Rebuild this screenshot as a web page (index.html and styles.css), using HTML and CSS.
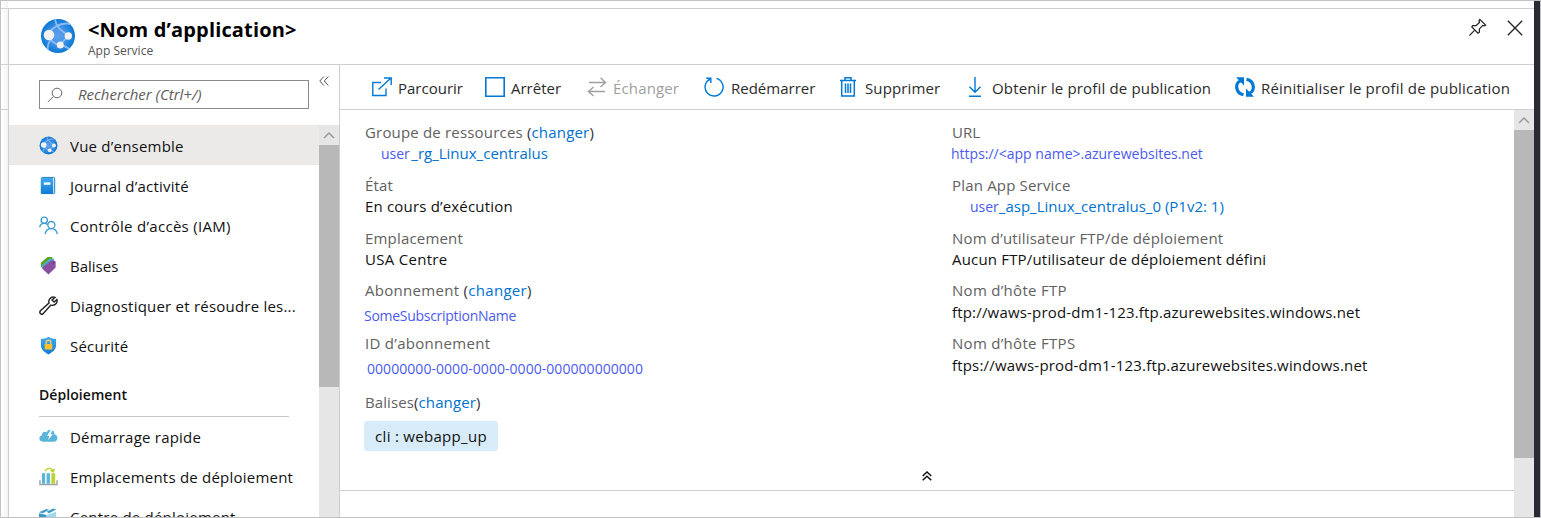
FILE: index.html
```html
<!DOCTYPE html>
<html lang="fr">
<head>
<meta charset="utf-8">
<title>App Service</title>
<link rel="stylesheet" href="styles.css">
</head>
<body>
<svg width="0" height="0" class="defs">
  <defs>
    <radialGradient id="globeFill"><stop offset="0" stop-color="#5ea0ef"/><stop offset=".45" stop-color="#4796e8"/><stop offset="1" stop-color="#0b78d4"/></radialGradient>
    <linearGradient id="blueFill" x1="0" y1="0" x2="0" y2="1"><stop offset="0" stop-color="#3faaf0"/><stop offset="1" stop-color="#0f7bd6"/></linearGradient>
    <clipPath id="globeClip"><circle cx="18" cy="18" r="17"/></clipPath>
    <symbol id="globe" viewBox="0 0 36 36">
      <circle cx="18" cy="18" r="17" fill="url(#globeFill)"/>
      <g clip-path="url(#globeClip)" fill="none" stroke="#8dbcf5" stroke-width="1.8">
        <path d="M8 16C13 9 21 4 31 6M15 0C15 6 20 13 30 18M9 17C10 22 14 26 20 27C25 28 30 31 32 34M20 27L28 18M12 20C8 25 7 29 8 33"/>
      </g>
      <circle cx="9" cy="17" r="5.3" fill="#f2f2f2"/><circle cx="28.3" cy="18" r="3.7" fill="#f2f2f2"/><circle cx="20.3" cy="27" r="3.5" fill="#f2f2f2"/>
    </symbol>
  </defs>
</svg>
<div class="window">
  <div class="behind"><i></i><i></i><i></i></div>
  <div class="blade">
    <header class="head">
      <svg class="head-icon"><use href="#globe"/></svg>
      <div class="titles">
        <h1>&lt;Nom d’application&gt;</h1>
        <p>App Service</p>
      </div>
      <svg class="pin" viewBox="0 0 20 20"><path d="M12.500 1.500L18.500 7.500L17 8.200L15.500 7.800L12 11.500V15L10.500 16L4 9.500L5 8H8.500L12.200 4.500L11.500 3ZM7 12.700L1.500 18.500"/></svg>
      <svg class="close" viewBox="0 0 16 16"><path d="M.8.800L15.200 15.200M15.200.8L.8 15.200"/></svg>
    </header>
    <div class="main">
      <aside class="side">
        <div class="search-row">
          <div class="search">
            <svg viewBox="0 0 16 16"><circle cx="10" cy="6" r="4.800"/><path d="M6.500 9.400L.8 15"/></svg>
            <span>Rechercher (Ctrl+/)</span>
          </div>
          <svg class="collapse" viewBox="0 0 10 10"><path d="M4.800.5L.8 5L4.800 9.500M9.300.5L5.300 5L9.300 9.500"/></svg>
        </div>
        <div class="side-body">
          <nav class="menu">
            <a class="item on"><svg viewBox="0 0 36 36"><use href="#globe"/></svg><span>Vue d’ensemble</span></a>
            <a class="item"><svg viewBox="0 0 20 20"><rect x="2.500" y="1.500" width="14" height="17" rx="1" fill="#fff" stroke="#1478bf"/><rect x="2" y="2" width="13" height="17" rx="1" fill="url(#blueFill)"/><path d="M5 8H12" stroke="#fff" stroke-width="2.500"/></svg><span>Journal d’activité</span></a>
            <a class="item"><svg viewBox="0 0 20 20" fill="none" stroke="#3a9bd0" stroke-width="1.400"><circle cx="5.500" cy="4.500" r="3.300"/><circle cx="13" cy="9.500" r="3.700"/><path d="M.8 12C1 9.500 3 7.800 5.500 7.800C7 7.800 8 8.300 9 9M6.500 19C7 15.500 9.500 13.300 13 13.300S18.800 15.500 19.200 19"/></svg><span class="wide">Contrôle d’accès (IAM)</span></a>
            <a class="item"><svg viewBox="0 0 20 20"><path d="M2 7L9 1L14 1V5L2 12Z" fill="#5ba319"/><path d="M3 10L11 3L16 3V7L3 14Z" fill="#4aaed2"/><path d="M4 11.500L13 4.500L17.500 5.500V12L10 19.500L4 14Z" fill="#8a50a0"/><circle cx="15.300" cy="7" r=".8" fill="#4b2761"/></svg><span class="tight">Balises</span></a>
            <a class="item"><svg viewBox="0 0 20 20" fill="none" stroke="#222" stroke-width="1.500"><path d="M16.800 1.500C13.500.2 10.500 2.500 10.300 5.500C10.300 6.500 10.300 7 10.500 7.500L1.500 15.500C-.3 17.800 2.300 20.300 4.500 18.500L12.500 9.600C16 10.800 20 7.500 18.800 3.700L16 6.300L13.700 4.200Z"/></svg><span>Diagnostiquer et résoudre les...</span></a>
            <a class="item"><svg viewBox="0 0 20 20"><path d="M10 .8C12.500 2.500 15 3 18 3V9.500C18 14 14.500 17 10 19.500C5.500 17 2 14 2 9.500V3C5 3 7.500 2.500 10 .8Z" fill="url(#blueFill)"/><path d="M7.500 9V7A2.500 2.500 0 0 1 12.500 7V9" fill="none" stroke="#ffd15c" stroke-width="1.400"/><rect x="6" y="8.300" width="8" height="6" rx=".6" fill="#fdbf2d"/></svg><span>Sécurité</span></a>
            <h2>Déploiement</h2>
            <a class="item"><svg viewBox="0 0 20 20"><path d="M5 15.500C-.5 15.500-1 9.500 3 9C2.500 5.500 6.500 4 8 5.500C10 1 17 2.500 16 7.500C20.500 8 20.500 15 16 15.500Z" fill="#59b4d9"/><path d="M12.500 3L8.500 9.500H11L9.500 14L14.500 7.500H12L14.500 3Z" fill="#fff"/></svg><span>Démarrage rapide</span></a>
            <a class="item"><svg viewBox="0 0 20 20"><path d="M1 14V18.500H19V14" fill="none" stroke="#a0a1a2" stroke-width="1.500"/><path d="M3 6.500H6.500V17.500H3ZM8 6.500H11.500V17.500H8Z" fill="#59b4d9"/><path d="M13 6.500H17V17.500H13Z" fill="#b8d432"/><path d="M6.500 4.500C8 .5 13.500.5 14.800 4M12 3.500L15 5L16.300 2" fill="none" stroke="#b8d432" stroke-width="1.500"/></svg><span>Emplacements de déploiement</span></a>
            <a class="item"><svg viewBox="0 0 20 20"><path d="M0 5.500L8 2L10.500 3L4 6.500ZM8 5L15 1.500L18 2.500L10.500 6.500Z" fill="#3999c6"/><path d="M0 6.500L8 8.500V19L0 16Z" fill="#3999c6"/><path d="M8 8.500L18 5V16L8 19Z" fill="#9fd7ee"/></svg><span>Centre de déploiement</span></a>
          </nav>
          <div class="scroll side-scroll"><svg viewBox="0 0 20 20"><path d="M5 13L10 8L15 13"/></svg><b></b></div>
        </div>
      </aside>
      <section class="content">
        <div class="toolbar">
          <div class="cmd c1"><svg viewBox="0 0 20 20"><path d="M9 5.500H.8V18.500H14V11.500M6.500 12.500L19 1M12 1H19.200V8"/></svg><span>Parcourir</span></div>
          <div class="cmd c2"><svg viewBox="0 0 20 20"><path d="M.8.800H19.200V19.200H.8Z" stroke-width="1.600"/></svg><span>Arrêter</span></div>
          <div class="cmd c3"><svg viewBox="0 0 20 20"><path d="M2 5.500H18.500M13.500.800L18.500 5.500L13.500 10M18 14.500H1.500M6.500 10L1.500 14.500L6.500 19"/></svg><span>Échanger</span></div>
          <div class="cmd c4"><svg viewBox="0 0 20 20"><path d="M12.500 1.400A9 9 0 1 1 5.500 2.300M2.200 1.300H6.800V6M6.500 1.500L4.500 3.500"/></svg><span>Redémarrer</span></div>
          <div class="cmd c5"><svg viewBox="0 0 20 20"><path d="M2 3.500H18M7 3V.8H13V3M3.700 4V19H16.300V4M7.500 6.500V16M10 6.500V16M12.500 6.500V16" stroke-width="1.500"/></svg><span>Supprimer</span></div>
          <div class="cmd c6"><svg viewBox="0 0 20 20"><path d="M10 0V15M4.500 9.800L10 15.300L15.500 9.800M4 19.200H16"/></svg><span>Obtenir le profil de publication</span></div>
          <div class="cmd c7"><svg viewBox="0 0 20 20"><path d="M8.500 17.800C0 16 0 5.500 5.500 4M11.500 2.200C20 4 20 14.500 14.500 16" stroke-width="3.200"/><path d="M1 .3H9V8.500ZM19 19.700H11V11.500Z" fill="#0078d4" stroke="none"/></svg><span>Réinitialiser le profil de publication</span></div>
        </div>
        <div class="pane">
          <div class="pane-main">
            <div class="essentials">
              <dl>
                <div class="pair"><dt>Groupe de ressources <em>(<a>changer</a>)</em></dt><dd class="link in1"><span class="edit">user</span><span>_rg_Linux_centralus</span></dd></div>
                <div class="pair"><dt>État</dt><dd>En cours d’exécution</dd></div>
                <div class="pair"><dt>Emplacement</dt><dd class="wide">USA Centre</dd></div>
                <div class="pair"><dt class="wide">Abonnement <em>(<a>changer</a>)</em></dt><dd class="low sub"><span class="edit">SomeSubscriptionName</span></dd></div>
                <div class="pair"><dt class="wide">ID d’abonnement</dt><dd class="low in2"><span class="edit">00000000-0000-0000-0000-000000000000</span></dd></div>
                <div class="tags"><dt>Balises<em>(<a>changer</a>)</em></dt><dd class="tag wide">cli : webapp_up</dd></div>
              </dl>
              <dl>
                <div class="pair"><dt class="tight">URL</dt><dd class="url"><span class="edit">https://&lt;app name&gt;.azurewebsites.net</span></dd></div>
                <div class="pair"><dt>Plan App Service</dt><dd class="link in3"><span class="edit">user</span><span>_asp_Linux_centralus_0 (P1v2: 1)</span></dd></div>
                <div class="pair"><dt>Nom d’utilisateur FTP/de déploiement</dt><dd>Aucun FTP/utilisateur de déploiement défini</dd></div>
                <div class="pair"><dt class="wide">Nom d’hôte FTP</dt><dd>ftp://waws-prod-dm1-123.ftp.azurewebsites.windows.net</dd></div>
                <div class="pair"><dt class="wide">Nom d’hôte FTPS</dt><dd class="last">ftps://waws-prod-dm1-123.ftp.azurewebsites.windows.net</dd></div>
              </dl>
            </div>
            <div class="fold"><svg viewBox="0 0 10 10"><path d="M.7 5L5 1L9.300 5M.7 9.300L5 5.300L9.300 9.300"/></svg></div>
          </div>
          <div class="scroll main-scroll"><svg viewBox="0 0 20 20"><path d="M5 13L10 8L15 13"/></svg><b></b></div>
        </div>
      </section>
    </div>
  </div>
  <div class="edge"></div>
</div>
</body>
</html>
```

FILE: styles.css
```css
* { box-sizing: border-box; margin: 0; padding: 0; }
body { width: 1541px; height: 518px; overflow: hidden; background: #fff; color: #111; font: 15px/20px "Open Sans", "Noto Sans", sans-serif; }
span, dt, dd { white-space: pre; }
svg { display: block; flex: none; }
.defs { position: absolute; }
.window { display: flex; width: 1541px; height: 518px; border: 1px solid #c1c1c1; }
.behind { width: 7px; padding-top: 7px; background: linear-gradient(90deg, #fff, #f3f3f3); flex: none; }
.behind i { display: block; border-top: 1px solid #d2d2d2; height: 56px; }
.behind i:nth-child(2) { height: 45px; }
.blade { flex: none; width: 1526px; height: 509px; margin-top: 7px; border: solid #cfcfcf; border-width: 1px 0 0 1px; }
.edge { width: 6px; background: #262b34; flex: none; }

.head { display: flex; height: 56px; border-bottom: 1px solid #cfcfcf; padding: 9px 11px 0 31px; align-items: flex-start; }
.head-icon { width: 36px; height: 36px; }
.titles { margin-left: 12px; padding-top: 1px; flex: 1; }
h1 { font-size: 20px; line-height: 22px; font-weight: 700; color: #000; letter-spacing: .16px; }
.titles p { font-size: 12px; line-height: 20px; color: #555; }
.pin { width: 19px; height: 19px; fill: none; stroke: #222; stroke-width: 1.3; margin-right: 20px; }
.close { width: 16px; height: 16px; fill: none; stroke: #222; stroke-width: 1.3; margin-top: 2px; }

.main { display: flex; height: 452px; }
.side { width: 331px; border-right: 1px solid #cfcfcf; flex: none; display: flex; flex-direction: column; }
.search-row { display: flex; height: 60px; padding: 15px 0 0 30px; flex: none; }
.search { width: 270px; height: 29px; border: 1px solid #8a8a8a; display: flex; align-items: center; color: #5c5c5c; font-style: italic; }
.search svg { width: 16px; height: 16px; margin: 0 15px 0 7px; fill: none; stroke: #666; }
.search span { margin-top: -2px; }
.collapse { width: 10px; height: 10px; margin: -4px 0 0 10px; fill: none; stroke: #555; }
.side-body { display: flex; height: 392px; overflow: hidden; }
.menu { width: 310px; flex: none; letter-spacing: .22px; }
.item { display: flex; align-items: center; height: 40px; padding: 2px 0 0 30px; }
.item svg { width: 19px; height: 19px; margin: -1px 12px 0 0; }
.on { background: #ebeae9; }
.menu h2 { margin: 0 0 -1px 30px; width: 250px; height: 52px; border-bottom: 1px solid #c8c8c8; padding-top: 20px; font-size: 14px; line-height: 20px; font-weight: 600; letter-spacing: .06px; }
.wide, .menu .wide { letter-spacing: .3px; }
.tight, .menu .tight { letter-spacing: 0; }

.scroll { width: 20px; background: #e6e6e6; flex: none; }
.scroll svg { width: 20px; height: 20px; fill: none; stroke: #9a9a9a; stroke-width: 1.5; }
.scroll b { display: block; background: #b8b8b8; height: 242px; }

.content { flex: 1; }
.toolbar { display: flex; align-items: center; height: 45px; border-bottom: 1px solid #cfcfcf; color: #2b2b2b; }
.cmd { display: flex; align-items: center; flex: none; }
.cmd svg { width: 20px; height: 20px; fill: none; stroke: #0078d4; stroke-width: 1.4; }
.cmd span { margin: 2px 0 0 6px; }
.c1 { margin-left: 32px; width: 113px; }
.c2 { width: 102px; }
.c3 { width: 117px; color: #a0a0a0; letter-spacing: .15px; }
.c3 svg { stroke: #a0a0a0; }
.c4 { width: 134px; }
.c5 { width: 127px; }
.c6 { width: 270px; letter-spacing: .16px; }
.c7 { letter-spacing: .2px; }
.c4 span, .c5 span, .c6 span { margin-left: 7px; }
.c5 { letter-spacing: .12px; }

.pane { display: flex; height: 407px; }
.pane-main { width: 1174px; height: 381px; border-bottom: 1px solid #cfcfcf; flex: none; }
.main-scroll { height: 407px; }
.main-scroll b { height: 328px; }
.essentials { display: grid; grid-template-columns: 587px 587px; height: 351px; padding: 12.2px 0 0 25px; letter-spacing: .18px; }
.pair { height: 52.7px; line-height: 21px; }
.pair dt { height: 21.4px; }
.pair:first-child dt { height: 21px; }
dt { color: #616161; }
em { font-style: normal; color: #333; }
a { color: inherit; }
dt a, .link { color: #0072cf; }
.link { letter-spacing: 0; }
.edit { color: #4b5bf0; font-size: 14px; letter-spacing: 0; }
.in1 { padding-left: 16px; }
.in1 .edit { margin-right: 1.5px; }
.in2 { padding-left: 2px; }
.in2 .edit { letter-spacing: .05px; }
.in3 { padding-left: 18px; }
.low { padding-top: 4px; }
.sub, .url { margin-left: -1px; }
.sub { padding-top: 3px; }
.sub .edit { letter-spacing: -.28px; }
.last { padding-top: 1px; }
.tags { padding-top: 6px; letter-spacing: .1px; }
.tags dt { height: 21.4px; }
.tag { display: flex; align-items: center; justify-content: center; width: 134px; height: 30px; margin: 8px 0 0 -1px; background: #d7ebf9; border-radius: 3px; color: #111; }
.fold svg { width: 10px; height: 10px; margin: 10px auto 0; fill: none; stroke: #111; stroke-width: 1.5; }
```
